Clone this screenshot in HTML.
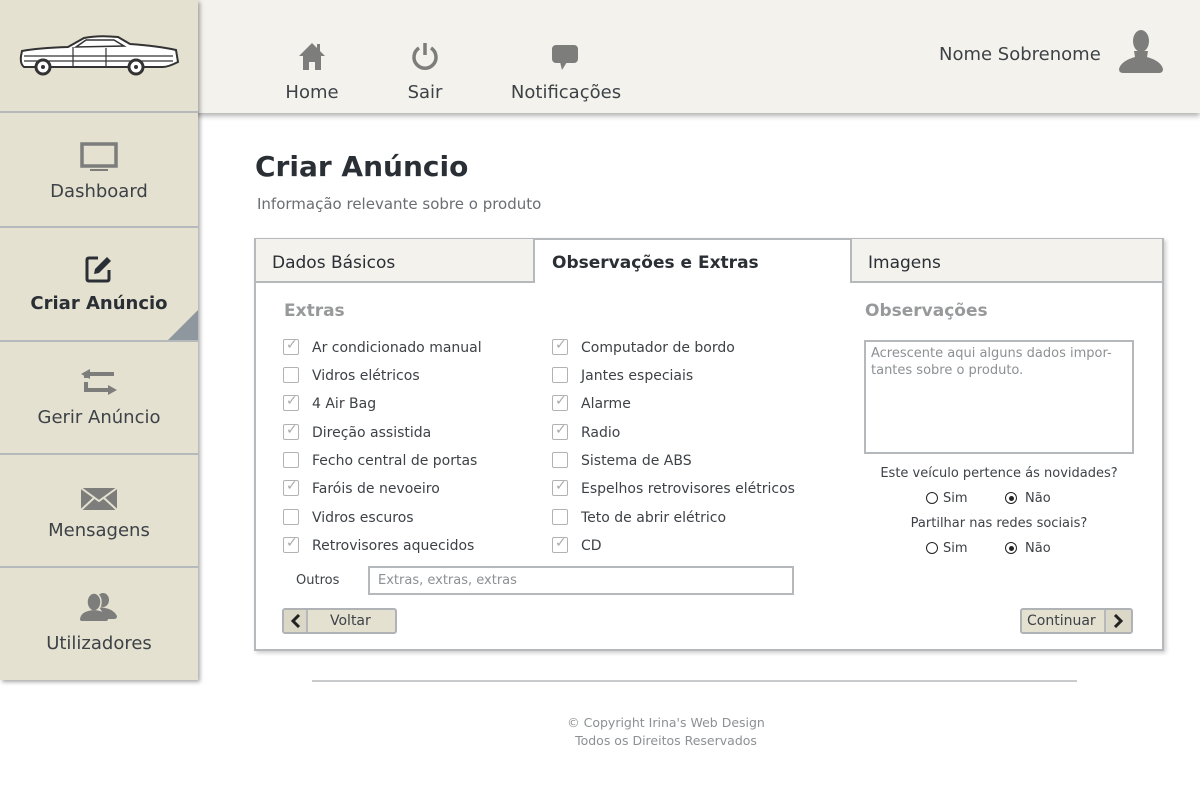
<!DOCTYPE html>
<html><head><meta charset="utf-8"><style>
*{margin:0;padding:0;box-sizing:border-box}
body{width:1200px;height:800px;background:#fff;font-family:"DejaVu Sans","Liberation Sans",sans-serif;color:#3d4247;position:relative;overflow:hidden}
.a{position:absolute}
.hdr{left:0;top:0;width:1200px;height:113px;background:#f4f2ed;box-shadow:0 3px 5px rgba(0,0,0,.3)}
.side{left:0;top:0;width:198px;height:680px;background:#e5e1d1;box-shadow:2px 2px 4px rgba(0,0,0,.35);z-index:2}
.sep{left:0;width:198px;height:2px;background:#b6b9bb}
.si{width:198px;text-align:center;font-size:18px;color:#3d4247}
.nav{text-align:center;font-size:18px;color:#3d4247}
.cb{width:16px;height:16px;border:1.5px solid #b0b3b5;border-radius:2px;background:#fff}
.cb.c::after{content:"✓";position:absolute;left:2px;top:-3px;font-size:14px;color:#aaa}
.lbl{font-size:14px;color:#3d4247}
.tab{top:239px;height:44px;font-size:17px;padding:14px 16px;color:#2a2f35}
.rad{width:12px;height:12px;border:1.3px solid #222;border-radius:50%;background:#fff}
.rad.on::after{content:"";position:absolute;left:2.5px;top:2.5px;width:5px;height:5px;border-radius:50%;background:#222}
.btn{height:26px;border:2px solid #b0b3b5;border-radius:3px;background:#e5e1d1;font-size:14px}
</style></head><body>
<div class="a hdr"></div>
<svg class="a" style="left:297px;top:41px" width="30" height="30" viewBox="0 0 30 30"><path d="M15 2 L2 15 H6 V29 H12 V21 H18 V29 H24 V15 H28 L23 10 V3 H20 V7 Z" fill="#7d7e7c"/></svg>
<div class="a nav" style="left:272px;top:82px;width:80px">Home</div>
<svg class="a" style="left:410px;top:41px" width="30" height="30" viewBox="0 0 30 30"><path d="M9 7 A11 11 0 1 0 21 7" fill="none" stroke="#7d7e7c" stroke-width="3.5"/><path d="M15 2 V14" stroke="#7d7e7c" stroke-width="3.5"/></svg>
<div class="a nav" style="left:395px;top:82px;width:60px">Sair</div>
<svg class="a" style="left:551px;top:44px" width="28" height="26" viewBox="0 0 28 26"><rect x="1" y="1" width="26" height="18" rx="4" fill="#7d7e7c"/><path d="M9 18 L11 26 L16 18Z" fill="#7d7e7c"/></svg>
<div class="a nav" style="left:505px;top:82px;width:122px">Notificações</div>
<div class="a" style="left:939px;top:44px;font-size:18px;color:#3d4247">Nome Sobrenome</div>
<svg class="a" style="left:1118px;top:29px" width="46" height="44" viewBox="0 0 46 44"><ellipse cx="23" cy="12" rx="8" ry="11" fill="#7d7e7c"/><path d="M16 22 L17 28 Q3 32 1 40 Q1 44 5 44 H41 Q45 44 45 40 Q43 32 29 28 L30 22Z" fill="#7d7e7c"/></svg>

<div class="a side">
<svg class="a" style="left:18px;top:34px" width="162" height="45" viewBox="0 0 162 45"><path d="M4 17 Q20 14 50 13 L66 4 Q80 1 100 3 L112 10 Q140 12 158 16 L160 28 Q150 33 145 33 H6 Q2 30 3 22Z" fill="#fff" stroke="#333" stroke-width="2"/><path d="M58 13 L68 6 H96 L106 12Z" fill="#fff" stroke="#333" stroke-width="1.5"/><path d="M55 13 V32 M88 14 V32 M6 22 H155 M6 27 H155" stroke="#333" stroke-width="1.2"/><circle cx="25" cy="33" r="7" fill="#fff" stroke="#333" stroke-width="3"/><circle cx="25" cy="33" r="2" fill="#333"/><circle cx="118" cy="33" r="7" fill="#fff" stroke="#333" stroke-width="3"/><circle cx="118" cy="33" r="2" fill="#333"/></svg>
<div class="a sep" style="top:111px"></div>
<svg class="a" style="left:80px;top:142px" width="38" height="30" viewBox="0 0 38 30"><rect x="2" y="2" width="34" height="22" fill="none" stroke="#7d7e7c" stroke-width="3.5"/><rect x="10" y="27" width="18" height="2" fill="#7d7e7c"/></svg>
<div class="a si" style="top:181px">Dashboard</div>
<div class="a sep" style="top:226px"></div>
<svg class="a" style="left:84px;top:254px" width="30" height="30" viewBox="0 0 30 30"><path d="M14 4 H5 Q3 4 3 6 V25 Q3 27 5 27 H23 Q25 27 25 25 V16" fill="none" stroke="#2a2f35" stroke-width="3"/><path d="M10 20 L11 15 L23 3 L27 7 L15 19Z" fill="#2a2f35"/></svg>
<div class="a si" style="top:293px;font-weight:bold;color:#2a2f35">Criar Anúncio</div>
<svg class="a" style="left:168px;top:310px" width="30" height="30"><path d="M30 0 V30 H0Z" fill="#8e979d"/></svg>
<div class="a sep" style="top:340px"></div>
<svg class="a" style="left:80px;top:368px" width="38" height="28" viewBox="0 0 38 28"><path d="M10 1 L1 6 L10 11 V8 H34 V4 H10Z M28 17 L37 22 L28 27 V24 H4 V14 H8 V20 H28Z M4 4 V10 H8 V4Z" fill="#7d7e7c"/></svg>
<div class="a si" style="top:407px">Gerir Anúncio</div>
<div class="a sep" style="top:453px"></div>
<svg class="a" style="left:80px;top:487px" width="38" height="24" viewBox="0 0 38 24"><rect x="1" y="1" width="36" height="22" fill="#7d7e7c"/><path d="M1 1 L19 14 L37 1 M1 23 L14 11 M37 23 L24 11" fill="none" stroke="#e5e1d1" stroke-width="2"/></svg>
<div class="a si" style="top:520px">Mensagens</div>
<div class="a sep" style="top:566px"></div>
<svg class="a" style="left:79px;top:592px" width="40" height="30" viewBox="0 0 40 30"><ellipse cx="24" cy="8" rx="6" ry="7" fill="#7d7e7c"/><path d="M20 15 Q34 16 38 24 Q38 27 35 27 H28Z" fill="#7d7e7c"/><ellipse cx="15" cy="10" rx="7" ry="9" fill="#7d7e7c" stroke="#e5e1d1" stroke-width="1.5"/><path d="M1 27 Q2 19 15 18 Q28 19 29 27 Q29 29 27 29 H3 Q1 29 1 27Z" fill="#7d7e7c"/></svg>
<div class="a si" style="top:633px">Utilizadores</div>
</div>

<div class="a" style="left:255px;top:150px;font-size:28px;font-weight:bold;color:#2a2f35">Criar Anúncio</div>
<div class="a" style="left:257px;top:195px;font-size:15px;color:#6a6e72">Informação relevante sobre o produto</div>

<div class="a" style="left:254px;top:238px;width:910px;height:413px;border:2px solid #b6b9bb;box-shadow:2px 2px 4px rgba(0,0,0,.2);background:#fff"></div>
<div class="a tab" style="left:256px;width:279px;background:#f4f2ed;border-right:2px solid #b6b9bb;border-bottom:2px solid #b6b9bb">Dados Básicos</div>
<div class="a tab" style="left:535px;width:315px;font-weight:bold;padding-left:17px">Observações e Extras</div>
<div class="a tab" style="left:850px;width:312px;background:#f4f2ed;border-left:2px solid #b6b9bb;border-bottom:2px solid #b6b9bb">Imagens</div>

<div class="a" style="left:284px;top:301px;font-size:17px;font-weight:bold;color:#97999a">Extras</div>
<div class="a" style="left:865px;top:301px;font-size:17px;font-weight:bold;color:#97999a">Observações</div>

<div class="a cb c" style="left:283px;top:339px"></div><div class="a lbl" style="left:312px;top:340px">Ar condicionado manual</div>
<div class="a cb" style="left:283px;top:367px"></div><div class="a lbl" style="left:312px;top:368px">Vidros elétricos</div>
<div class="a cb c" style="left:283px;top:395px"></div><div class="a lbl" style="left:312px;top:396px">4 Air Bag</div>
<div class="a cb c" style="left:283px;top:424px"></div><div class="a lbl" style="left:312px;top:425px">Direção assistida</div>
<div class="a cb" style="left:283px;top:452px"></div><div class="a lbl" style="left:312px;top:453px">Fecho central de portas</div>
<div class="a cb c" style="left:283px;top:480px"></div><div class="a lbl" style="left:312px;top:481px">Faróis de nevoeiro</div>
<div class="a cb" style="left:283px;top:509px"></div><div class="a lbl" style="left:312px;top:510px">Vidros escuros</div>
<div class="a cb c" style="left:283px;top:537px"></div><div class="a lbl" style="left:312px;top:538px">Retrovisores aquecidos</div>

<div class="a cb c" style="left:552px;top:339px"></div><div class="a lbl" style="left:581px;top:340px">Computador de bordo</div>
<div class="a cb" style="left:552px;top:367px"></div><div class="a lbl" style="left:581px;top:368px">Jantes especiais</div>
<div class="a cb c" style="left:552px;top:395px"></div><div class="a lbl" style="left:581px;top:396px">Alarme</div>
<div class="a cb c" style="left:552px;top:424px"></div><div class="a lbl" style="left:581px;top:425px">Radio</div>
<div class="a cb" style="left:552px;top:452px"></div><div class="a lbl" style="left:581px;top:453px">Sistema de ABS</div>
<div class="a cb c" style="left:552px;top:480px"></div><div class="a lbl" style="left:581px;top:481px">Espelhos retrovisores elétricos</div>
<div class="a cb" style="left:552px;top:509px"></div><div class="a lbl" style="left:581px;top:510px">Teto de abrir elétrico</div>
<div class="a cb c" style="left:552px;top:537px"></div><div class="a lbl" style="left:581px;top:538px">CD</div>

<div class="a" style="left:296px;top:573px;font-size:13px">Outros</div>
<div class="a" style="left:368px;top:566px;width:426px;height:29px;border:2px solid #b6b9bb;font-size:13px;color:#8d9093;padding:5px 8px">Extras, extras, extras</div>

<div class="a btn" style="left:282px;top:608px;width:115px"></div>
<div class="a" style="left:284px;top:610px;width:24px;height:22px;border-right:2px solid #b6b9bb;background:#dcd8c8"></div>
<svg class="a" style="left:290px;top:614px" width="12" height="14"><path d="M9 1 L3 7 L9 13" fill="none" stroke="#222" stroke-width="3"/></svg>
<div class="a" style="left:330px;top:613px;font-size:14px">Voltar</div>

<div class="a btn" style="left:1020px;top:608px;width:113px"></div>
<div class="a" style="left:1104px;top:610px;width:27px;height:22px;border-left:2px solid #b6b9bb;background:#dcd8c8"></div>
<svg class="a" style="left:1112px;top:614px" width="12" height="14"><path d="M3 1 L9 7 L3 13" fill="none" stroke="#222" stroke-width="3"/></svg>
<div class="a" style="left:1027px;top:613px;font-size:14px">Continuar</div>

<div class="a" style="left:864px;top:340px;width:270px;height:114px;border:2px solid #b6b9bb;font-size:13px;color:#8d9093;padding:3px 5px;line-height:17px">Acrescente aqui alguns dados impor-<br>tantes sobre o produto.</div>
<div class="a" style="left:864px;top:466px;width:270px;text-align:center;font-size:13px">Este veículo pertence ás novidades?</div>
<div class="a rad" style="left:926px;top:492px"></div><div class="a" style="left:943px;top:491px;font-size:13px">Sim</div>
<div class="a rad on" style="left:1005px;top:492px"></div><div class="a" style="left:1025px;top:491px;font-size:13px">Não</div>
<div class="a" style="left:864px;top:516px;width:270px;text-align:center;font-size:13px">Partilhar nas redes sociais?</div>
<div class="a rad" style="left:926px;top:542px"></div><div class="a" style="left:943px;top:541px;font-size:13px">Sim</div>
<div class="a rad on" style="left:1005px;top:542px"></div><div class="a" style="left:1025px;top:541px;font-size:13px">Não</div>

<div class="a" style="left:312px;top:680px;width:765px;height:2px;background:#c8cacc"></div>
<div class="a" style="left:546px;top:714px;width:240px;text-align:center;font-size:12.5px;color:#8d9093;line-height:18px">© Copyright Irina's Web Design<br>Todos os Direitos Reservados</div>
</body></html>
